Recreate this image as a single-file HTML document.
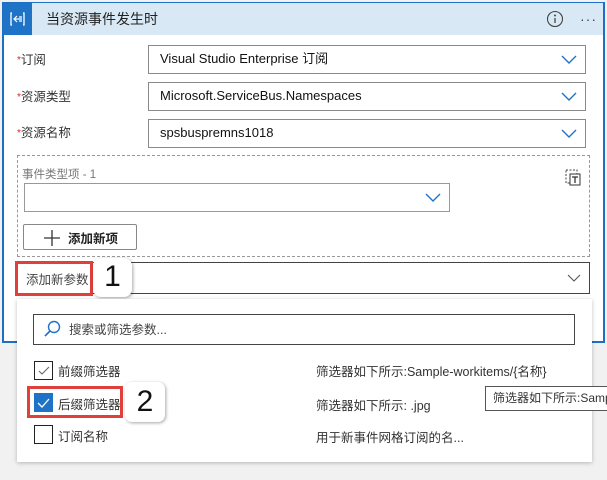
<!DOCTYPE html>
<html><head><meta charset="utf-8"><style>
*{box-sizing:border-box;margin:0;padding:0}
body{width:607px;height:480px;background:#f1f1f1;position:relative;overflow:hidden;font-family:"Liberation Sans","Noto Sans CJK SC",sans-serif;font-size:12.5px;color:#222}
.abs{position:absolute}
.card{left:2px;top:2px;width:603px;height:341px;border:2px solid #1c6fc4;border-top-width:1px;background:#fff}
.hdr{left:4px;top:3px;width:599px;height:32px;background:#d9e8f5}
.ico{left:3px;top:3px;width:29px;height:32px;background:#1f73c6}
.lbl{font-size:12.5px;color:#333}
.star{color:#d23;font-size:10px;position:relative;top:-1px}
.dd{border:1px solid #8a8a8a;background:#fff;height:29px;padding-left:11px;line-height:26px;font-size:13px;color:#111}
.chev{position:absolute;right:8px;top:7px}
.cb{width:19px;height:19px;border:1px solid #222;background:#fff}
.t{color:#333;font-size:12.5px}
</style></head><body>
<div class="abs card"></div>
<div class="abs hdr"></div>
<div class="abs ico"><svg width="29" height="32" viewBox="0 0 29 32"><path d="M9 10h-1v12h1M20 10h1v12h-1" stroke="#fff" fill="none" stroke-width="1.3"/><path d="M11 16h8M14 13l-3 3 3 3M16 14h3M16 18h3" stroke="#fff" fill="none" stroke-width="1.2"/></svg></div>
<div class="abs" style="left:46px;top:9px;font-size:14px;color:#222">当资源事件发生时</div>
<svg class="abs" style="left:545px;top:9px" width="20" height="20"><circle cx="10" cy="10" r="7.5" fill="none" stroke="#444" stroke-width="1.1"/><circle cx="10" cy="6.5" r="1" fill="#444"/><path d="M10 9v5" stroke="#444" stroke-width="1.3"/></svg>
<div class="abs" style="left:580px;top:11px;font-size:14px;color:#444;letter-spacing:1px">···</div>

<div class="abs lbl" style="left:17px;top:49px"><span class="star">*</span>订阅</div>
<div class="abs dd" style="left:148px;top:45px;width:438px">Visual Studio Enterprise 订阅<svg class="chev" width="16" height="12"><path d="M1 3l7 7 7-7" stroke="#1f73c6" fill="none" stroke-width="1.4"/></svg></div>
<div class="abs lbl" style="left:17px;top:86px"><span class="star">*</span>资源类型</div>
<div class="abs dd" style="left:148px;top:82px;width:438px">Microsoft.ServiceBus.Namespaces<svg class="chev" width="16" height="12"><path d="M1 3l7 7 7-7" stroke="#1f73c6" fill="none" stroke-width="1.4"/></svg></div>
<div class="abs lbl" style="left:17px;top:122px"><span class="star">*</span>资源名称</div>
<div class="abs dd" style="left:148px;top:119px;width:438px">spsbuspremns1018<svg class="chev" width="16" height="12"><path d="M1 3l7 7 7-7" stroke="#1f73c6" fill="none" stroke-width="1.4"/></svg></div>

<div class="abs" style="left:17px;top:155px;width:573px;height:102px;border:1px dashed #999"></div>
<div class="abs" style="left:22px;top:166px;font-size:11.5px;color:#777">事件类型项 - 1</div>
<svg class="abs" style="left:564px;top:168px" width="18" height="18"><rect x="2" y="2" width="11" height="13" fill="none" stroke="#444" stroke-dasharray="2 1.5"/><rect x="6" y="6" width="10" height="11" fill="#fff" stroke="#333"/><path d="M8 9h6M11 9v6" stroke="#333" stroke-width="1.3"/></svg>
<div class="abs" style="left:24px;top:183px;width:426px;height:29px;border:1px solid #999"><svg class="chev" width="16" height="12"><path d="M1 3l7 7 7-7" stroke="#1f73c6" fill="none" stroke-width="1.4"/></svg></div>
<div class="abs" style="left:23px;top:224px;width:114px;height:26px;border:1px solid #888;border-radius:2px;background:#fff"><svg class="abs" style="left:19px;top:4px" width="18" height="18"><path d="M9 1v16M1 9h16" stroke="#333" stroke-width="1.3"/></svg><span class="abs" style="left:44px;top:3px;font-size:12.5px;font-weight:bold;color:#222">添加新项</span></div>

<div class="abs" style="left:17px;top:262px;width:573px;height:32px;border:1px solid #444;background:#fff"><svg class="abs" style="right:8px;top:10px" width="14" height="10"><path d="M1 2l6 6 6-6" stroke="#555" fill="none" stroke-width="1.1"/></svg></div>
<div class="abs" style="left:15px;top:261px;width:78px;height:35px;border:3px solid #e0403c"></div>
<div class="abs" style="left:26px;top:269px;font-size:12.5px;color:#444">添加新参数</div>
<div class="abs" style="left:93px;top:258px;width:39px;height:39px;background:#fff;border-radius:8px;box-shadow:1px 1px 3px rgba(0,0,0,.35);font-size:30px;text-align:center;line-height:38px;color:#111">1</div>

<div class="abs" style="left:17px;top:299px;width:575px;height:163px;background:#fff;box-shadow:0 1px 4px rgba(0,0,0,.25)"></div>
<div class="abs" style="left:33px;top:314px;width:542px;height:31px;border:1px solid #444;background:#fff"></div>
<svg class="abs" style="left:42px;top:319px" width="20" height="20"><circle cx="12" cy="8" r="5.5" fill="none" stroke="#1f73c6" stroke-width="1.4"/><path d="M8 12l-5 5" stroke="#1f73c6" stroke-width="1.6"/></svg>
<div class="abs t" style="left:69px;top:319px;color:#444">搜索或筛选参数...</div>

<div class="abs cb" style="left:34px;top:361px"><svg width="17" height="17"><path d="M4 9l3 3 7-7" stroke="#666" fill="none" stroke-width="1.1"/></svg></div>
<div class="abs t" style="left:58px;top:361px">前缀筛选器</div>
<div class="abs t" style="left:316px;top:361px">筛选器如下所示:Sample-workitems/{名称}</div>

<div class="abs" style="left:27px;top:386px;width:96px;height:32px;border:3px solid #e0403c"></div>
<div class="abs" style="left:34px;top:393px;width:19px;height:19px;background:#1f73c6"><svg width="19" height="19"><path d="M4 10l4 4 7-8" stroke="#fff" fill="none" stroke-width="1.3"/></svg></div>
<div class="abs t" style="left:58px;top:394px">后缀筛选器</div>
<div class="abs" style="left:125px;top:382px;width:40px;height:40px;background:#fff;border-radius:7px;box-shadow:1px 1px 3px rgba(0,0,0,.35);font-size:30px;text-align:center;line-height:40px;color:#111">2</div>
<div class="abs t" style="left:316px;top:395px">筛选器如下所示: .jpg</div>
<div class="abs" style="left:485px;top:386px;width:130px;height:25px;border:1px solid #555;background:#fff;padding-left:7px;line-height:22px;font-size:12px;color:#333;white-space:nowrap">筛选器如下所示:Sample</div>

<div class="abs cb" style="left:34px;top:425px"></div>
<div class="abs t" style="left:58px;top:426px">订阅名称</div>
<div class="abs t" style="left:316px;top:427px">用于新事件网格订阅的名...</div>
</body></html>
